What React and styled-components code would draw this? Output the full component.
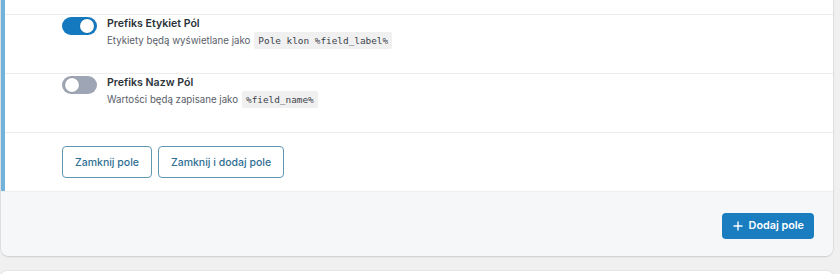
import React from "react";
import styled, { createGlobalStyle } from "styled-components";

const GlobalStyle = createGlobalStyle`
  html, body {
    margin: 0;
    padding: 0;
    background: #f0f0f1;
    font-family: Inter, "Noto Sans", sans-serif;
    -webkit-font-smoothing: antialiased;
  }
`;

const Page = styled.div`
  width: 840px;
  height: 274px;
  overflow: hidden;
  padding: 0 7px 0 1px;
  box-sizing: border-box;
`;

const Card = styled.div`
  background: #fff;
  border-radius: 0 0 8px 8px;
  box-shadow: 0 1px 2px rgba(0, 0, 0, 0.12), 0 0 0 1px #e6e6e8;
  overflow: hidden;
`;

const Editor = styled.div`
  border-left: 4px solid #72b3de;
`;

const Top = styled.div`
  height: 15px;
  box-sizing: border-box;
  border-bottom: 1px solid #ececee;
`;

const Row = styled.div`
  display: flex;
  align-items: flex-start;
  gap: 10px;
  height: 59px;
  padding: 2px 0 0 57px;
  box-sizing: border-box;
  border-bottom: 1px solid #ececee;
`;

const Toggle = styled.span`
  flex: none;
  position: relative;
  width: 35px;
  height: 18px;
  border-radius: 9px;
  background: ${(p) => (p.$on ? "#1479bf" : "#9ea5b4")};
`;

const Knob = styled.span`
  position: absolute;
  top: 2px;
  ${(p) => (p.$on ? "right: 3px;" : "left: 3px;")}
  width: 14px;
  height: 14px;
  border-radius: 50%;
  background: #fff;
  box-shadow: 0 0 0 0.5px rgba(0, 0, 0, 0.15);
`;

const Text = styled.div`
  display: flex;
  flex-direction: column;
  gap: 1px;
`;

const Title = styled.div`
  font-size: 10.6px;
  font-weight: 600;
  color: #2c3338;
  line-height: 14px;
`;

const Desc = styled.div`
  font-size: 9.7px;
  color: #5a6069;
  line-height: 17px;
`;

const Code = styled.code`
  font-family: "DejaVu Sans Mono", "Liberation Mono", monospace;
  font-size: 9.4px;
  color: #3c434a;
  background: #f0f0f1;
  padding: 3px 4px;
  margin-left: 4px;
  border-radius: 2px;
`;

const Actions = styled.div`
  display: flex;
  gap: 6px;
  height: 58px;
  padding: 13px 0 0 57px;
  box-sizing: border-box;
`;

const Outline = styled.button`
  height: 32px;
  padding: 0 12px;
  border: 1px solid #5f98b5;
  border-radius: 4px;
  background: #fff;
  color: #2f6f93;
  font-family: inherit;
  font-size: 10.5px;
  font-weight: 500;
`;

const Footer = styled.div`
  display: flex;
  justify-content: flex-end;
  align-items: center;
  height: 65px;
  padding: 3px 19px 0 0;
  box-sizing: border-box;
  background: #f6f7f8;
  border-top: 1px solid #eceef0;
`;

const Primary = styled.button`
  display: flex;
  align-items: center;
  gap: 6px;
  height: 26px;
  padding: 0 10px 0 11px;
  border: none;
  border-radius: 4px;
  background: #1a7dc0;
  color: #fff;
  font-family: inherit;
  font-size: 10.8px;
  font-weight: 600;
`;

const Next = styled.div`
  margin-top: 15px;
  height: 20px;
  background: #fff;
  border-radius: 6px 6px 0 0;
  box-shadow: 0 0 0 1px #e6e6e8;
`;

const fields = [
  {
    on: true,
    title: "Prefiks Etykiet Pól",
    desc: "Etykiety będą wyświetlane jako",
    code: "Pole klon %field_label%",
  },
  {
    on: false,
    title: "Prefiks Nazw Pól",
    desc: "Wartości będą zapisane jako",
    code: "%field_name%",
  },
];

const App = () => (
  <Page>
    <GlobalStyle />
    <Card>
      <Editor>
        <Top />
        {fields.map((f) => (
          <Row key={f.title}>
            <Toggle $on={f.on}>
              <Knob $on={f.on} />
            </Toggle>
            <Text>
              <Title>{f.title}</Title>
              <Desc>
                {f.desc}
                <Code>{f.code}</Code>
              </Desc>
            </Text>
          </Row>
        ))}
        <Actions>
          <Outline>Zamknij pole</Outline>
          <Outline>Zamknij i dodaj pole</Outline>
        </Actions>
      </Editor>
      <Footer>
        <Primary>
          <svg width="10" height="10" viewBox="0 0 10 10">
            <path d="M5 0.5v9M0.5 5h9" stroke="#fff" strokeWidth="1.4" />
          </svg>
          Dodaj pole
        </Primary>
      </Footer>
    </Card>
    <Next />
  </Page>
);

export default App;
